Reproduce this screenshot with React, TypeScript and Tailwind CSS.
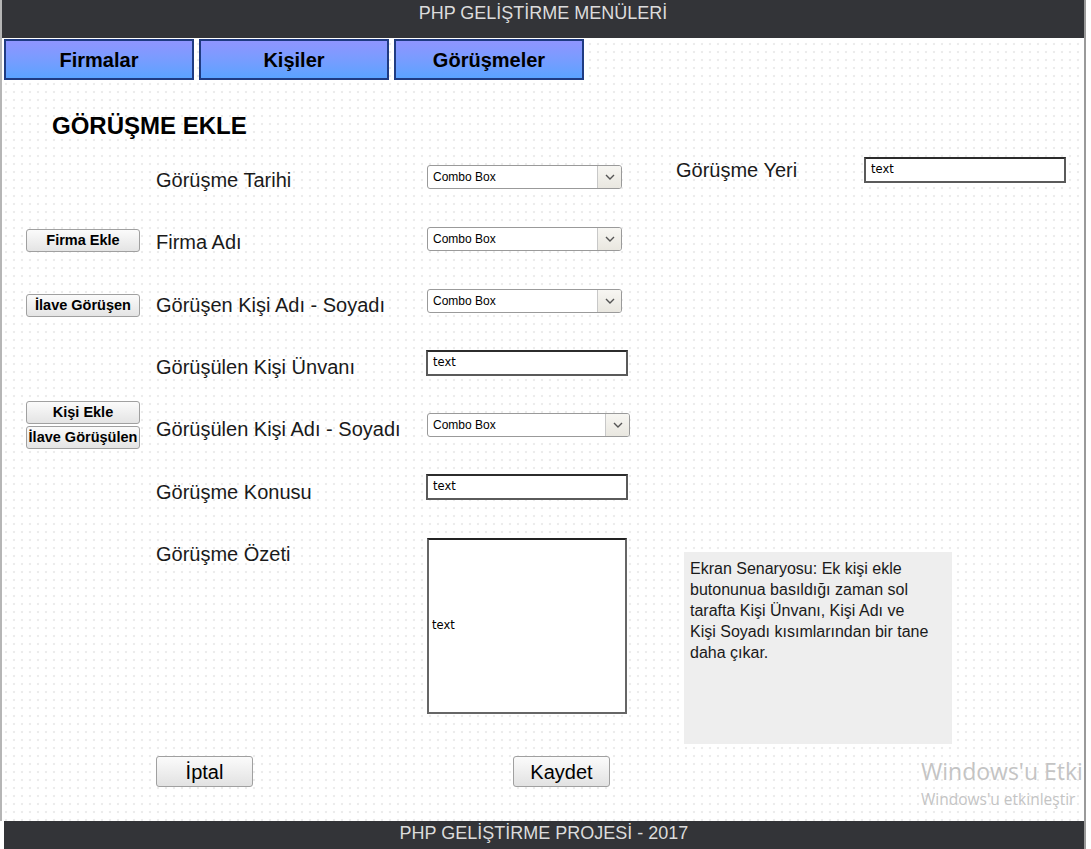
import React from "react";

const font = { fontFamily: '"Liberation Sans", Arial, sans-serif' };

function Chevron() {
  return (
    <svg width="10" height="6" viewBox="0 0 10 6" fill="none">
      <polyline points="1,1 5,5 9,1" stroke="#555" strokeWidth="1.4" />
    </svg>
  );
}

function Combo({ cls }: { cls: string }) {
  return (
    <div className={"flex h-[24px] bg-white border border-[#9a9a9a] rounded-[3px] overflow-hidden " + cls}>
      <div className="flex-1 flex items-center pl-[5px] text-[12px] text-black">Combo Box</div>
      <div className="w-[24px] flex items-center justify-center border-l border-[#c8c8c8] bg-gradient-to-b from-[#f7f6f2] to-[#e9e7e0]">
        <Chevron />
      </div>
    </div>
  );
}

function TextBox({ cls }: { cls: string }) {
  return (
    <div
      className={"flex items-center h-[26px] bg-white border-2 border-[#5a5a5a] border-t-[#2c2c2c] pl-[5px] text-black " + cls}
      style={{ fontFamily: '"DejaVu Sans", "Liberation Sans", sans-serif', fontSize: 11.5 }}
    >
      text
    </div>
  );
}

function SmallBtn({ label, cls }: { label: string; cls: string }) {
  return (
    <div
      className={
        "w-[114px] h-[23px] flex items-center justify-center whitespace-nowrap text-[14.5px] font-bold text-black border border-[#a0a0a0] rounded-[3px] bg-gradient-to-b from-[#fbfbfb] to-[#e4e4e4] " +
        cls
      }
    >
      {label}
    </div>
  );
}

function BigBtn({ label, cls }: { label: string; cls: string }) {
  return (
    <div
      className={
        "w-[97px] h-[31px] flex items-center justify-center text-[20px] text-black border border-[#a0a0a0] rounded-[3px] bg-gradient-to-b from-[#fbfbfb] to-[#e2e2e2] " +
        cls
      }
    >
      {label}
    </div>
  );
}

function Label({ text, cls }: { text: string; cls: string }) {
  return <div className={"text-[20px] leading-[24px] text-[#1a1a1a] whitespace-nowrap " + cls}>{text}</div>;
}

function NavBtn({ label }: { label: string }) {
  return (
    <div className="w-[190px] h-[41px] flex items-center justify-center border-2 border-[#1f3b82] bg-gradient-to-b from-[#8f95ff] to-[#5aa3ff] text-[20px] font-bold text-black">
      {label}
    </div>
  );
}

export default function App() {
  return (
    <div className="w-[1091px] h-[849px] bg-white overflow-hidden" style={font}>
      <div className="w-[1086px] h-[849px] border-r-2 border-[#9a9a9a] relative overflow-hidden">
        <div className="h-[821px] border-l-2 border-[#b5b5b5] bg-white bg-[radial-gradient(circle,#ececec_1px,transparent_1.6px)] bg-[length:8px_8px]">
          {/* header */}
          <div className="h-[38px] bg-[#333438] flex justify-center pt-[3px]">
            <span className="text-[18px] leading-[20px] text-[#dcdcdc]">PHP GELİŞTİRME MENÜLERİ</span>
          </div>
          {/* nav */}
          <div className="flex gap-[5px] ml-[2px] mt-[1px]">
            <NavBtn label="Firmalar" />
            <NavBtn label="Kişiler" />
            <NavBtn label="Görüşmeler" />
          </div>

          {/* title */}
          <div className="mt-[32px] pl-[50px] text-[24px] leading-[28px] font-bold text-black">GÖRÜŞME EKLE</div>

          {/* form */}
          <div className="mt-[9px] pl-[24px] grid grid-cols-[130px_270px_250px_1fr]">
            {/* row 0 */}
            <div className="h-[62px]" />
            <div className="h-[62px]"><Label text="Görüşme Tarihi" cls="mt-[19px]" /></div>
            <div className="h-[62px]"><Combo cls="mt-[16px] ml-[1px] w-[195px]" /></div>
            <div className="h-[62px] flex items-start">
              <Label text="Görüşme Yeri" cls="mt-[9px] w-[188px]" />
              <TextBox cls="mt-[8px] w-[202px]" />
            </div>

            {/* row 1 */}
            <div className="h-[62px]"><SmallBtn label="Firma Ekle" cls="mt-[18px]" /></div>
            <div className="h-[62px]"><Label text="Firma Adı" cls="mt-[19px]" /></div>
            <div className="h-[62px]"><Combo cls="mt-[16px] ml-[1px] w-[195px]" /></div>
            <div className="h-[62px]" />

            {/* row 2 */}
            <div className="h-[62px]"><SmallBtn label="İlave Görüşen" cls="mt-[21px]" /></div>
            <div className="h-[62px]"><Label text="Görüşen Kişi Adı - Soyadı" cls="mt-[20px]" /></div>
            <div className="h-[62px]"><Combo cls="mt-[16px] ml-[1px] w-[195px]" /></div>
            <div className="h-[62px]" />

            {/* row 3 */}
            <div className="h-[62px]" />
            <div className="h-[62px]"><Label text="Görüşülen Kişi Ünvanı" cls="mt-[20px]" /></div>
            <div className="h-[62px]"><TextBox cls="mt-[15px] w-[202px]" /></div>
            <div className="h-[62px]" />

            {/* row 4 */}
            <div className="h-[62px] flex flex-col gap-[2px]">
              <SmallBtn label="Kişi Ekle" cls="mt-[4px]" />
              <SmallBtn label="İlave Görüşülen" cls="" />
            </div>
            <div className="h-[62px]"><Label text="Görüşülen Kişi Adı - Soyadı" cls="mt-[20px]" /></div>
            <div className="h-[62px]"><Combo cls="mt-[16px] ml-[1px] w-[203px]" /></div>
            <div className="h-[62px]" />

            {/* row 5 */}
            <div className="h-[62px]" />
            <div className="h-[62px]"><Label text="Görüşme Konusu" cls="mt-[21px]" /></div>
            <div className="h-[62px]"><TextBox cls="mt-[15px] w-[202px]" /></div>
            <div className="h-[62px]" />

            {/* row 6 */}
            <div className="h-[235px]" />
            <div className="h-[235px]"><Label text="Görüşme Özeti" cls="mt-[21px]" /></div>
            <div className="h-[235px]">
              <div
                className="mt-[17px] ml-[1px] w-[200px] h-[176px] bg-white border-2 border-[#666] border-t-[#222] flex items-center pl-[3px] text-black"
                style={{ fontFamily: '"DejaVu Sans", "Liberation Sans", sans-serif', fontSize: 11.5 }}
              >
                text
              </div>
            </div>
            <div className="h-[235px]">
              <div className="mt-[31px] ml-[8px] w-[268px] h-[192px] bg-[#eeeeee] pl-[6px] pt-[6px] text-[16px] leading-[21px] text-[#1a1a1a] whitespace-nowrap">
                Ekran Senaryosu: Ek kişi ekle
                <br />
                butonunua basıldığı zaman sol
                <br />
                tarafta Kişi Ünvanı, Kişi Adı ve
                <br />
                Kişi Soyadı kısımlarından bir tane
                <br />
                daha çıkar.
              </div>
            </div>

            {/* row 7 */}
            <div />
            <div><BigBtn label="İptal" cls="" /></div>
            <div><BigBtn label="Kaydet" cls="ml-[87px]" /></div>
            <div />
          </div>
        </div>

        {/* footer */}
        <div className="ml-[4px] w-[1080px] h-[30px] bg-[#333438] flex justify-center pt-[2px]">
          <span className="text-[18px] leading-[20px] text-[#dcdcdc]">PHP GELİŞTİRME PROJESİ - 2017</span>
        </div>

        {/* windows watermark overlay */}
        <div
          className="absolute left-[921px] top-[756px] text-[#c4c4c4] whitespace-nowrap"
          style={{ fontFamily: '"Open Sans", "Noto Sans", sans-serif' }}
        >
          <div className="text-[23px] leading-[31px]">Windows'u Etki</div>
          <div className="text-[15.5px] leading-[20px] mt-[2px]">Windows'u etkinleştir</div>
        </div>
      </div>
    </div>
  );
}
